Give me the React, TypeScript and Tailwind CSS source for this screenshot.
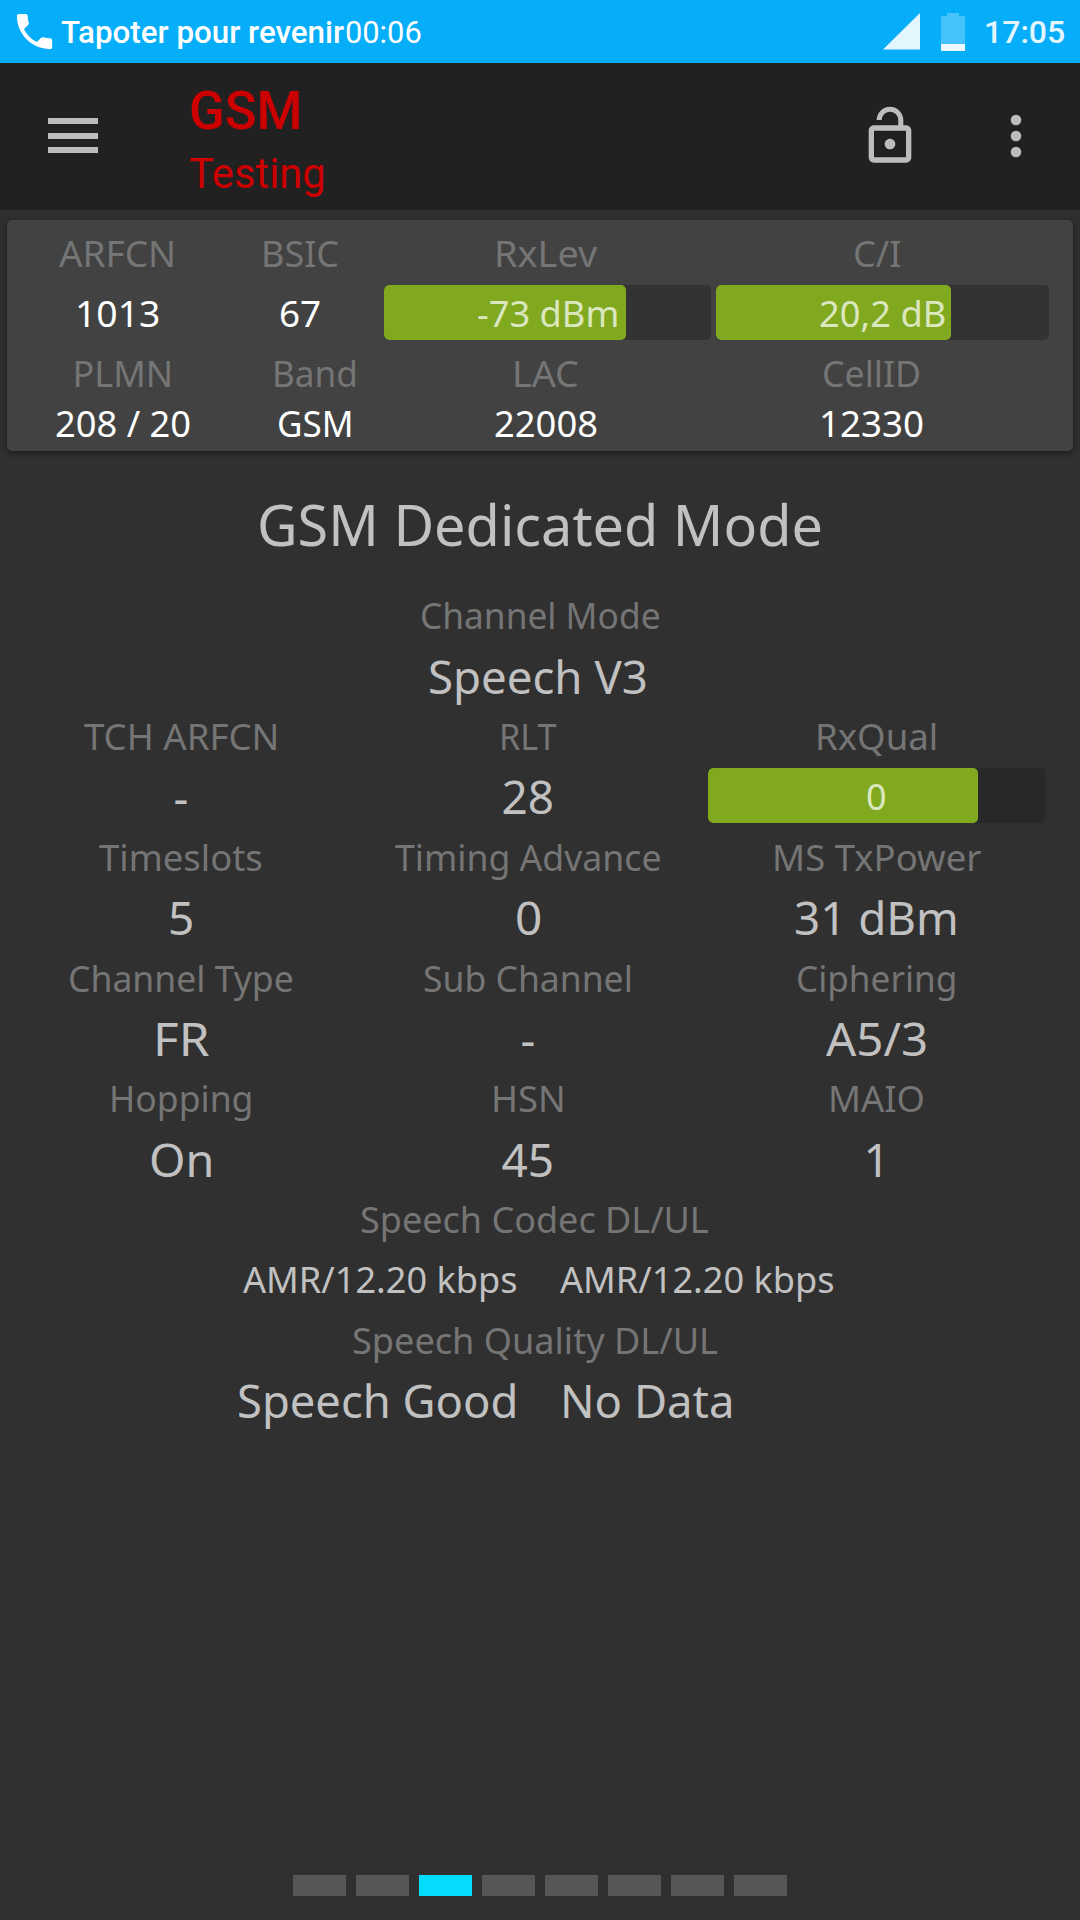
import { useLayoutEffect, useRef, useState } from "react";
import type { ReactNode } from "react";

/** Single line of text whose glyphs are stretched so that it spans `w` pixels. */
function Fit({ w, children, className = "" }: { w: number; children: string; className?: string }) {
  const ref = useRef<HTMLSpanElement>(null);
  const [scale, setScale] = useState(1);
  useLayoutEffect(() => {
    const el = ref.current;
    if (el) setScale(w / el.offsetWidth);
  }, [w]);
  return (
    <span className={`block ${className}`} style={{ width: w }}>
      <span
        ref={ref}
        className="inline-block origin-left whitespace-pre"
        style={{ transform: `scaleX(${scale})` }}
      >
        {children}
      </span>
    </span>
  );
}

function Cell({ children, className = "" }: { children: ReactNode; className?: string }) {
  return <div className={`flex items-center justify-center ${className}`}>{children}</div>;
}

function Bar({ value, w, fill, track }: { value: string; w: number; fill: number; track: string }) {
  return (
    <div className={`relative h-[55px] overflow-hidden rounded-[5px] ${track}`}>
      <div className="h-full rounded-[5px] bg-[#81a920]" style={{ width: fill }} />
      <div className="absolute inset-0 flex items-center justify-center pt-[2px] text-[36px] text-[#dbe7bf]">
        <Fit w={w}>{value}</Fit>
      </div>
    </div>
  );
}

type Item = [string, number, string, number];

const rows: Item[][] = [
  [["TCH ARFCN", 195, "-", 15], ["RLT", 58, "28", 53], ["RxQual", 123, "0", 21]],
  [["Timeslots", 164, "5", 26], ["Timing Advance", 266, "0", 27], ["MS TxPower", 209, "31 dBm", 165]],
  [["Channel Type", 226, "FR", 57], ["Sub Channel", 210, "-", 15], ["Ciphering", 161, "A5/3", 102]],
  [["Hopping", 144, "On", 65], ["HSN", 75, "45", 53], ["MAIO", 97, "1", 26]],
];

const LABEL = "h-[60.4px] pt-[2px] text-[36px] text-[#757575]";
const VALUE = "h-[60.4px] text-[46px] text-[#c1c1c1]";

export default function App() {
  return (
    <div className="flex h-[1920px] w-[1080px] flex-col overflow-hidden bg-[#303030] font-['Noto_Sans',sans-serif] leading-none">
      <header className="flex h-[63px] shrink-0 items-center bg-[#06adf8] font-['Roboto',sans-serif] text-[32px] text-white">
        <svg viewBox="0 0 24 24" className="ml-[11px] size-[47px] fill-white">
          <path d="M6.62 10.79c1.44 2.83 3.76 5.14 6.59 6.59l2.2-2.2c.27-.27.67-.36 1.02-.24 1.12.37 2.33.57 3.57.57.55 0 1 .45 1 1V20c0 .55-.45 1-1 1-9.39 0-17-7.61-17-17 0-.55.45-1 1-1h3.5c.55 0 1 .45 1 1 0 1.25.2 2.45.57 3.57.11.35.03.74-.25 1.02l-2.2 2.2z" />
        </svg>
        <Fit w={283} className="ml-[3px] font-medium">Tapoter pour revenir</Fit>
        <Fit w={77} className="ml-[1px]">00:06</Fit>
        <div className="ml-auto flex items-center pr-[15px]">
          <svg viewBox="0 0 37 37" className="mr-[21px] size-[37px] fill-[#e3f6fe]">
            <path d="M37 0V36.5H0z" />
          </svg>
          <svg viewBox="0 0 24 38" className="mr-[19px] h-[38px] w-[24px]">
            <path d="M6 0h12v3h6v28H0V3h6z" fill="#46c2fa" />
            <path d="M0 31h24v7H0z" fill="#edf9fe" />
          </svg>
          <Fit w={81} className="font-medium text-[#e3f6fe]">17:05</Fit>
        </div>
      </header>

      <nav className="flex h-[147px] shrink-0 items-center bg-[#212121] pr-[32px] pb-[2px] font-['Roboto',sans-serif]">
        <div className="ml-[48px] flex w-[50px] flex-col gap-[8.5px]">
          <div className="h-[6px] bg-[#bdbdbd]" />
          <div className="h-[6px] bg-[#bdbdbd]" />
          <div className="h-[6px] bg-[#bdbdbd]" />
        </div>
        <div className="ml-[91px] flex flex-col items-start pt-[12px] text-[#cc0000]">
          <Fit w={114} className="h-[64px] text-[53px] leading-[64px] font-medium">GSM</Fit>
          <Fit w={137} className="h-[62px] text-[42px] leading-[62px]">Testing</Fit>
        </div>
        <svg viewBox="0 0 24 24" className="mr-[62px] ml-auto size-[64px] fill-[#bdbdbd]">
          <path d="M12 17c1.1 0 2-.9 2-2s-.9-2-2-2-2 .9-2 2 .9 2 2 2zm6-9h-1V6c0-2.76-2.24-5-5-5S7 3.24 7 6h1.9c0-1.71 1.39-3.1 3.1-3.1 1.71 0 3.1 1.39 3.1 3.1v2H6c-1.1 0-2 .9-2 2v10c0 1.1.9 2 2 2h12c1.1 0 2-.9 2-2V10c0-1.1-.9-2-2-2zm0 12H6V10h12v10z" />
        </svg>
        <svg viewBox="0 0 24 24" className="size-[64px] fill-[#bdbdbd]">
          <circle cx="12" cy="6" r="2" />
          <circle cx="12" cy="12" r="2" />
          <circle cx="12" cy="18" r="2" />
        </svg>
      </nav>

      <section className="mx-[7px] mt-[10px] flex h-[231px] shrink-0 flex-col rounded-[5px] bg-[#424242] text-[36px] text-white shadow-[0_2px_6px_rgba(0,0,0,0.45)]">
        <div className="grid h-[65px] grid-cols-[221px_144px_347px_316px] pt-[2px] text-[#757575]">
          <Cell><Fit w={117}>ARFCN</Fit></Cell>
          <Cell><Fit w={78}>BSIC</Fit></Cell>
          <Cell><Fit w={103}>RxLev</Fit></Cell>
          <Cell><Fit w={48}>C/I</Fit></Cell>
        </div>
        <div className="grid h-[55px] grid-cols-[221px_144px_327px_333px]">
          <Cell className="pt-[2px]"><Fit w={85}>1013</Fit></Cell>
          <Cell className="pt-[2px]"><Fit w={42}>67</Fit></Cell>
          <div className="ml-[12px] w-[327px]"><Bar value="-73 dBm" w={142} fill={242} track="bg-[#333333]" /></div>
          <div className="ml-[17px] w-[333px]"><Bar value="20,2 dB" w={127} fill={234.5} track="bg-[#333333]" /></div>
        </div>
        <div className="grid h-[65px] grid-cols-[232px_152px_309px_342px] pt-[2px] text-[#757575]">
          <Cell><Fit w={101}>PLMN</Fit></Cell>
          <Cell><Fit w={86}>Band</Fit></Cell>
          <Cell><Fit w={67}>LAC</Fit></Cell>
          <Cell><Fit w={99}>CellID</Fit></Cell>
        </div>
        <div className="grid h-[38px] grid-cols-[232px_152px_309px_342px]">
          <Cell><Fit w={136}>208 / 20</Fit></Cell>
          <Cell><Fit w={77}>GSM</Fit></Cell>
          <Cell><Fit w={104}>22008</Fit></Cell>
          <Cell><Fit w={105}>12330</Fit></Cell>
        </div>
      </section>

      <main className="flex flex-1 flex-col pt-[12px]">
        <Cell className="h-[122px] text-[56px] text-[#c1c1c1]"><Fit w={566}>GSM Dedicated Mode</Fit></Cell>
        <Cell className={LABEL}><Fit w={241}>Channel Mode</Fit></Cell>
        <Cell className={`${VALUE} pr-[4px]`}><Fit w={220}>Speech V3</Fit></Cell>
        {rows.map((row, r) => (
          <div key={r} className="grid grid-cols-[362px_332px_365px]">
            {row.map(([label, lw]) => (
              <Cell key={label} className={LABEL}><Fit w={lw}>{label}</Fit></Cell>
            ))}
            {row.map(([label, , value, vw]) =>
              label === "RxQual" ? (
                <div key={label} className="px-[14px] pt-[2px]">
                  <Bar value={value} w={vw} fill={270} track="bg-[#282828]" />
                </div>
              ) : (
                <Cell key={label} className={VALUE}><Fit w={vw}>{value}</Fit></Cell>
              ),
            )}
          </div>
        ))}
        <Cell className={`${LABEL} pr-[11px]`}><Fit w={349}>Speech Codec DL/UL</Fit></Cell>
        <div className="grid h-[60.4px] grid-cols-[518px_1fr] items-center gap-x-[42px] pt-[2px] text-[36px] text-[#c1c1c1]">
          <Fit w={275} className="justify-self-end">AMR/12.20 kbps</Fit>
          <Fit w={275} className="justify-self-start">AMR/12.20 kbps</Fit>
        </div>
        <Cell className={`${LABEL} pr-[11px]`}><Fit w={366}>Speech Quality DL/UL</Fit></Cell>
        <div className="grid h-[60.4px] grid-cols-[518px_1fr] items-center gap-x-[42px] text-[46px] text-[#c1c1c1]">
          <Fit w={281} className="justify-self-end">Speech Good</Fit>
          <Fit w={175} className="justify-self-start">No Data</Fit>
        </div>

        <div className="mt-auto mb-[24px] flex justify-center gap-[10px]">
          {Array.from({ length: 8 }, (_, i) => (
            <div key={i} className={`h-[21px] w-[53px] ${i === 2 ? "bg-[#04ddff]" : "bg-[#565656]"}`} />
          ))}
        </div>
      </main>
    </div>
  );
}
